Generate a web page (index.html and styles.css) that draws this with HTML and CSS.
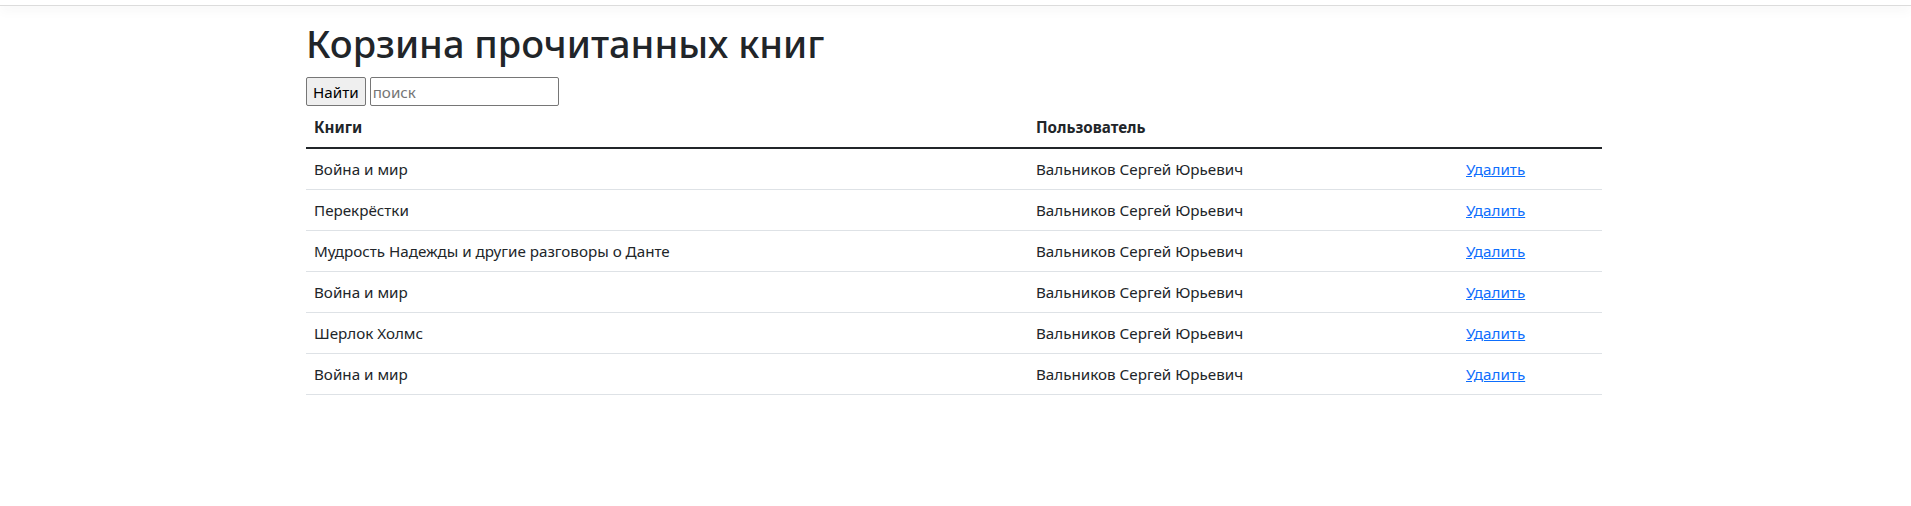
FILE: index.html
```html
<!DOCTYPE html>
<html lang="ru">
<head>
<meta charset="utf-8">
<title>Корзина прочитанных книг</title>
<link rel="stylesheet" href="styles.css">
</head>
<body>
<header class="topbar"></header>
<main class="container">
  <h1 class="title">Корзина прочитанных книг</h1>
  <form class="search"><button type="button" class="search-btn">Найти</button> <input class="search-input" type="text" placeholder="поиск"></form>
  <table class="table">
    <thead>
      <tr><th class="col-book">Книги</th><th class="col-user">Пользователь</th><th class="col-act"></th></tr>
    </thead>
    <tbody>
      <tr><td>Война и мир</td><td>Вальников Сергей Юрьевич</td><td><a href="#">Удалить</a></td></tr>
      <tr><td>Перекрёстки</td><td>Вальников Сергей Юрьевич</td><td><a href="#">Удалить</a></td></tr>
      <tr><td>Мудрость Надежды и другие разговоры о Данте</td><td>Вальников Сергей Юрьевич</td><td><a href="#">Удалить</a></td></tr>
      <tr><td>Война и мир</td><td>Вальников Сергей Юрьевич</td><td><a href="#">Удалить</a></td></tr>
      <tr><td>Шерлок Холмс</td><td>Вальников Сергей Юрьевич</td><td><a href="#">Удалить</a></td></tr>
      <tr><td>Война и мир</td><td>Вальников Сергей Юрьевич</td><td><a href="#">Удалить</a></td></tr>
    </tbody>
  </table>
</main>
</body>
</html>
```

FILE: styles.css
```css
* { box-sizing: border-box; }
html, body { margin: 0; padding: 0; background: #fff; }
body {
  font-family: "Noto Sans", "Open Sans", sans-serif;
  font-size: 15.2px;
  line-height: 24px;
  color: #212529;
}
.topbar {
  height: 6px;
  border-bottom: 1px solid #dcdcdc;
  box-shadow: 0 4px 12px rgba(0, 0, 0, 0.05);
  background: #fff;
}
.container {
  width: 1296px;
  margin: 0 0 0 306px;
  padding-top: 13px;
}
.title {
  margin: 0 0 10px 0;
  font-size: 38px;
  font-weight: 500;
  line-height: 48px;
}
.search {
  display: flex;
  gap: 4px;
  height: 30px;
}
.search-btn {
  font: inherit;
  color: #000;
  height: 29px;
  padding: 0 6px;
  background: #efefef;
  border: 1px solid #767676;
  border-radius: 2px;
}
.search-input {
  font: inherit;
  width: 189px;
  height: 29px;
  padding: 1px 2px;
  border: 1px solid #767676;
  border-radius: 2px;
}
.search-input::placeholder { color: #757575; }
.table {
  width: 100%;
  border-collapse: collapse;
  table-layout: fixed;
}
.col-book { width: 722px; }
.col-user { width: 430px; }
.table th, .table td {
  padding: 8px;
  text-align: left;
  vertical-align: top;
  border-bottom: 1px solid #dee2e6;
}
.table th { font-weight: 700; }
.table thead th { border-bottom: 2px solid #212529; }
.table a { color: #0d6efd; text-decoration: underline; }
```
